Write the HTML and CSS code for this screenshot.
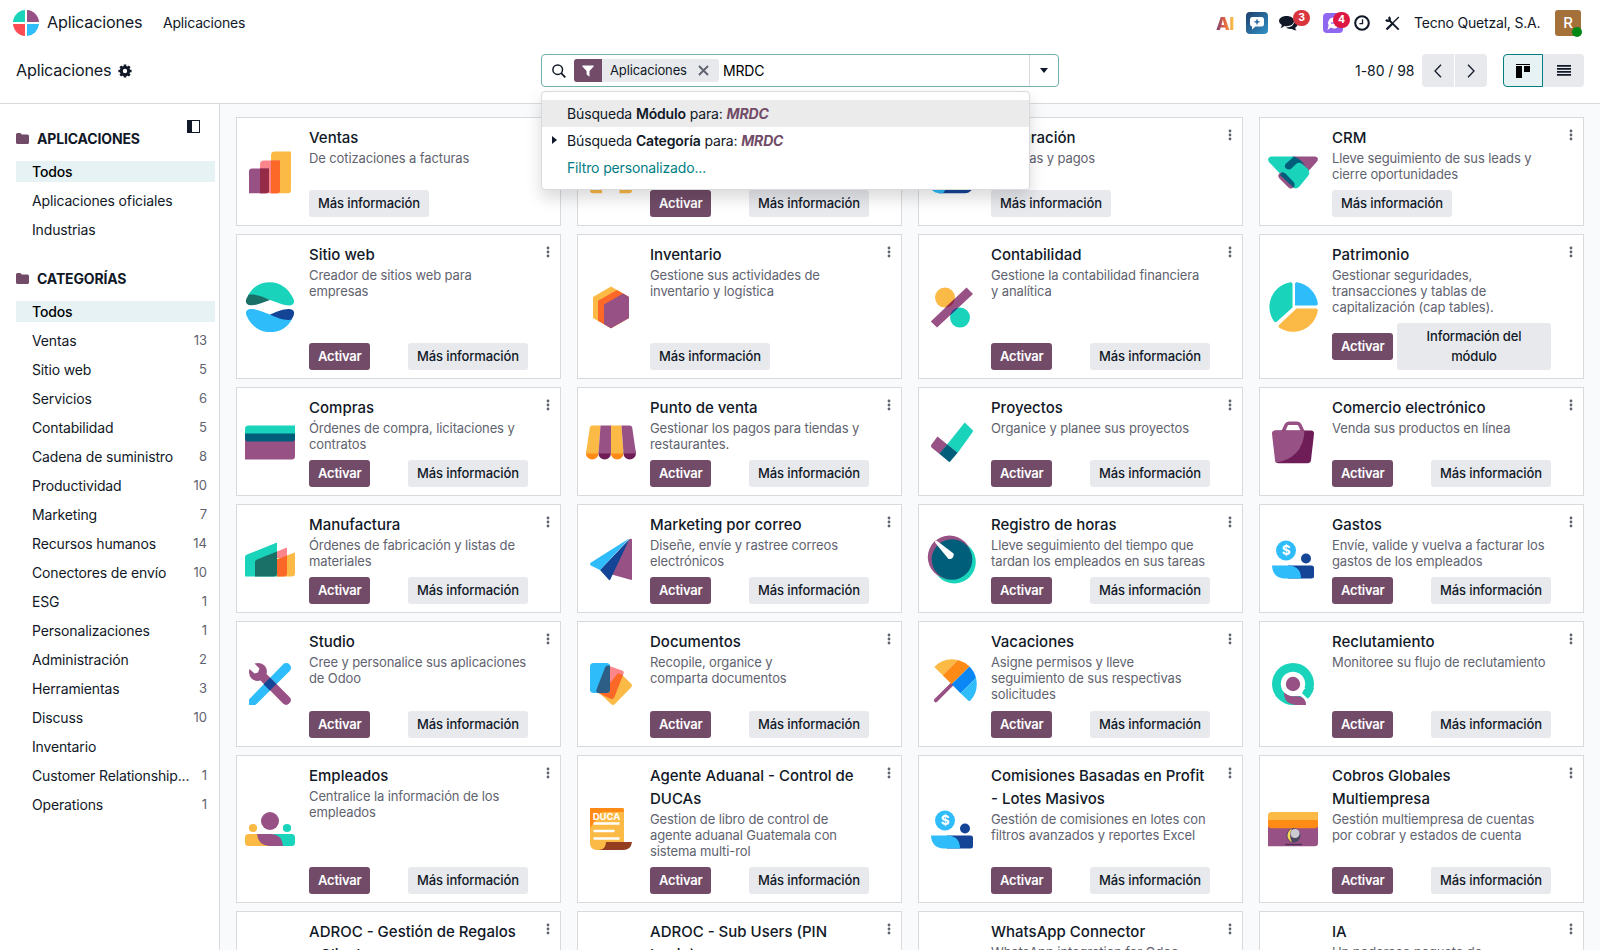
FILE: index.html
```html
<!DOCTYPE html>
<html lang="es">
<head>
<meta charset="utf-8">
<title>Aplicaciones</title>
<link rel="stylesheet" href="styles.css">
</head>
<body>
<svg class="defs" width="0" height="0">
  <defs>
    <linearGradient id="gBlue" x1="0" y1="0" x2="1" y2="1"><stop offset="0" stop-color="#1f3f6b"/><stop offset="1" stop-color="#3193c8"/></linearGradient>
    <clipPath id="slash"><path d="M3.8 39.5L39.5 5.5L46 12L10 45.5Z"/></clipPath>
    <symbol id="dots" viewBox="0 0 4 12"><circle cx="2" cy="2" r="1.4"/><circle cx="2" cy="6" r="1.4"/><circle cx="2" cy="10" r="1.4"/></symbol>
    <symbol id="folder" viewBox="0 0 13 11"><path d="M0 1.6Q0 0 1.6 0H4Q5.5 0 5.6 1.5H11.5Q13 1.5 13 3V9.4Q13 11 11.4 11H1.6Q0 11 0 9.4Z"/></symbol>
    <symbol id="expense" viewBox="0 0 50 50"><path fill="#144496" d="M20 31.5H43.5Q46 31.5 46 34V42Q46 44.500 43.500 44.500H20Z"/><path fill="#2ebcfa" d="M4 31.500H22Q33 33 33 44.500H17Q4.500 44 4 31.500Z"/><circle fill="#2ebcfa" cx="18" cy="16.500" r="10"/><circle fill="#144496" cx="38" cy="24.500" r="5"/><text x="18" y="21.400" text-anchor="middle" class="coin">$</text></symbol>
  </defs>
</svg>

<header class="navbar">
  <svg class="logo" viewBox="0 0 26 26"><path fill="#1ad3bb" d="M12 0V12H0A13 13 0 0 1 12 0"/><path fill="#985184" d="M14 0V12H26A13 13 0 0 0 14 0"/><path fill="#fc4b53" d="M12 26V14H0A13 13 0 0 0 12 26"/><path fill="#2ebcfa" d="M14 26V14H26A13 13 0 0 1 14 26"/></svg>
  <span class="brand">Aplicaciones</span>
  <span class="menu">Aplicaciones</span>
  <div class="systray">
    <span class="ai">AI</span>
    <svg class="t-chat" width="22" height="22" viewBox="0 0 22 22"><rect width="22" height="22" rx="4" fill="url(#gBlue)"/><path fill="#fff" d="M6.500 5H15.500Q18 5 18 7.500V12Q18 14.500 15.500 14.500H9.500L6 17.500V14.500Q4 14.200 4 12V7.500Q4 5 6.500 5Z"/><path d="M11 6.500L12 8.900L14.500 9.800L12 10.700L11 13.200L10 10.700L7.500 9.800L10 8.900Z" fill="#2f6da0"/></svg>
    <span class="t-msg"><svg width="19" height="15" viewBox="0 0 19 15" fill="#111827"><path d="M7.500 0C12 0 15 2.200 15 5S12 10.200 7.500 10.200Q6.500 10.200 5.500 10Q4 11.500 1.500 12Q2.800 10.500 2.800 9Q0 7.500 0 5C0 2.200 3.200 0 7.500 0Z"/><path d="M16 4.500Q18.500 6 18.500 8.500Q18.500 10.500 16.200 11.800Q16.300 13.500 17.500 14.600Q14.500 14.200 13 12.900Q9 13.500 7 11.600Q15 11.300 16 4.500Z"/></svg><b class="badge">3</b></span>
    <span class="t-wa"><svg width="20" height="20" viewBox="0 0 20 20"><rect width="20" height="20" rx="4" fill="#9068f0"/><path fill="#fff" d="M11 4.500A5.500 5.500 0 1 1 8 14.600L4.500 17L5.600 12.500A5.500 5.500 0 0 1 11 4.500Z"/><path fill="none" stroke="#9068f0" stroke-width="1.300" d="M8 10H14"/></svg><b class="badge crimson">4</b></span>
    <svg class="t-clock" width="16" height="16" viewBox="0 0 16 16" fill="none" stroke="#111827"><circle cx="8" cy="8" r="6.800" stroke-width="2.100"/><path d="M8.500 4.300V8.600H5.400" stroke-width="1.300"/></svg>
    <svg class="t-tools" width="15" height="15" viewBox="0 0 15 15" fill="none" stroke="#111827" stroke-width="2.300"><path d="M1.500 13.500L8 7"/><path d="M8 6.800L13.800 1" stroke-width="1.300"/><path d="M4 4L13.700 13.700" stroke-width="1.900"/><path d="M1 3.800Q2.500 5.600 4.300 4.400Q5.400 2.600 3.800 1"/></svg>
    <span class="company">Tecno Quetzal, S.A.</span>
    <span class="avatar">R<i class="online"></i></span>
  </div>
</header>

<section class="panel">
  <span class="crumb">Aplicaciones</span>
  <svg class="gear" width="14" height="14" viewBox="0 0 14 14"><circle cx="7" cy="7" r="3.700" fill="none" stroke="#111827" stroke-width="3"/><path d="M7 .4V3M7 11V13.600M.4 7H3M11 7H13.600M2.300 2.300L4 4M10 10L11.700 11.700M2.300 11.700L4 10M10 4L11.700 2.300" stroke="#111827" stroke-width="2.600"/></svg>
  <div class="search">
    <svg class="lens" width="14" height="14" viewBox="0 0 14 14" fill="none" stroke="#111827"><circle cx="5.700" cy="5.700" r="4.800" stroke-width="1.500"/><path d="M9.200 9.200L13.300 13.300" stroke-width="1.800"/></svg>
    <span class="facet"><span class="facet-icon"><svg width="12" height="12" viewBox="0 0 12 12"><path fill="#fff" d="M.4.500H11.600V1.500L7.500 5.900V11.700L4.600 9.500V5.900L.4 1.500Z"/></svg></span><span class="facet-text">Aplicaciones</span><svg width="11" height="11" viewBox="0 0 11 11"><path d="M1 1L10 10M10 1L1 10" stroke="#5f636f" stroke-width="1.900"/></svg></span>
    <span class="query">MRDC</span>
    <span class="toggle"><i class="caret"></i></span>
    <div class="suggest">
      <div class="opt active">Búsqueda <b>Módulo</b> para: <em>MRDC</em></div>
      <div class="opt"><i class="expand"></i>Búsqueda <b>Categoría</b> para: <em>MRDC</em></div>
      <div class="opt custom">Filtro personalizado...</div>
    </div>
  </div>
  <div class="right">
    <span class="pager">1-80 / 98</span>
    <div class="pg"><span><svg width="8" height="14" viewBox="0 0 8 14"><path d="M7 .8L1 7L7 13.200"/></svg></span><span><svg width="8" height="14" viewBox="0 0 8 14"><path d="M1 .8L7 7L1 13.200"/></svg></span></div>
    <div class="views"><span class="on"><svg width="14" height="14" viewBox="0 0 14 14"><path d="M0 0H14V1H0ZM0 2H6V14H0ZM8 2H14V8H8Z"/></svg></span><span><svg width="14" height="11" viewBox="0 0 14 11"><path fill="#111827" d="M0 0H14V1.800H0ZM0 3H14V4.800H0ZM0 6H14V7.800H0ZM0 9H14V10.800H0Z"/></svg></span></div>
  </div>
</section>

<div class="body">
<aside class="sidebar">
  <svg class="collapse" width="13" height="13" viewBox="0 0 13 13"><rect x=".5" y=".5" width="12" height="12" fill="none" stroke="#111827"/><path fill="#111827" d="M0 0H5V13H0Z"/></svg>
  <h2><svg><use href="#folder"/></svg>APLICACIONES</h2>
  <ul>
    <li class="sel">Todos</li><li>Aplicaciones oficiales</li><li>Industrias</li>
  </ul>
  <h2><svg><use href="#folder"/></svg>CATEGORÍAS</h2>
  <ul>
    <li class="sel">Todos</li>
    <li>Ventas<span>13</span></li>
    <li>Sitio web<span>5</span></li>
    <li>Servicios<span>6</span></li>
    <li>Contabilidad<span>5</span></li>
    <li>Cadena de suministro<span>8</span></li>
    <li>Productividad<span>10</span></li>
    <li>Marketing<span>7</span></li>
    <li>Recursos humanos<span>14</span></li>
    <li>Conectores de envío<span>10</span></li>
    <li>ESG<span>1</span></li>
    <li>Personalizaciones<span>1</span></li>
    <li>Administración<span>2</span></li>
    <li>Herramientas<span>3</span></li>
    <li>Discuss<span>10</span></li>
    <li>Inventario</li>
    <li>Customer Relationship...<span>1</span></li>
    <li>Operations<span>1</span></li>
  </ul>
</aside>

<main class="grid">
  <article class="card"><svg class="icon" viewBox="0 0 50 50"><path fill="#fbb945" d="M30 4.500H46V43Q46 46.200 43 46.200H26V8.500Q26 4.500 30 4.500Z"/><path fill="#fc868b" d="M19 13.500H35V43Q35 46.200 32 46.200H15V17.500Q15 13.500 19 13.500Z"/><path fill="#fc6828" d="M26 13.500H35V43Q35 46.200 32 46.200H26Z"/><path fill="#985184" d="M7 21.500H24V43Q24 46.200 21 46.200H4V24.500Q4 21.500 7 21.500Z"/><path fill="#962b48" d="M15 21.500H24V43Q24 46.200 21 46.200H15Z"/></svg><div class="info"><h3>Ventas</h3><p>De cotizaciones a facturas</p><div class="acts"><button class="more">Más información</button></div></div><svg class="kebab"><use href="#dots"/></svg></article>

  <article class="card"><svg class="icon" viewBox="0 0 50 50"><path fill="#985184" d="M4 8H46V26H4Z"/><path fill="#fbb945" d="M4 26H46V43Q46 46.200 43 46.200H33.500V34H16V46.200H7Q4 46.200 4 43Z"/></svg><div class="info"><div class="acts"><button class="go">Activar</button><button class="more">Más información</button></div></div><svg class="kebab"><use href="#dots"/></svg></article>

  <article class="card"><svg class="icon" viewBox="0 0 50 50"><path fill="#144496" d="M18 30H46V39Q45 46 38 46.200H12Z"/><path fill="#2ebcfa" d="M4 30H22V38L16 46.200H12Q4 46 4 38Z"/></svg><div class="info"><h3>Facturación</h3><p>Facturas y pagos</p><div class="acts"><button class="more">Más información</button></div></div><svg class="kebab"><use href="#dots"/></svg></article>

  <article class="card"><svg class="icon" viewBox="0 0 50 50"><path fill="#985184" d="M24 9.500H47Q51.500 10 49 14.500L40.500 24L24 16Z"/><path fill="#1ad3bb" d="M3 9.500H25L40 22Q42.500 26 40 29L31 40Q28 42.500 25 40.500L1 15Q-1.500 10.500 3 9.500Z"/><path fill="#005e7a" d="M26 9.600Q32 11.500 37.500 19Q32 13.500 28 17L24 21Q21 23.800 18 21.500Q15.500 19 18 16.500Z"/><path fill="#985184" d="M14 25.200L26 37Q26.500 40 24 41.400Q21.500 42 20 40L11 31Q8.500 27 14 25.200Z"/><path fill="#005e7a" d="M14 25.200Q16 25 18 27L26 35.500Q27.500 39 25.500 40.500L12 28Z"/></svg><div class="info"><h3>CRM</h3><p>Lleve seguimiento de sus leads y<br>cierre oportunidades</p><div class="acts"><button class="more">Más información</button></div></div><svg class="kebab"><use href="#dots"/></svg></article>

  <article class="card"><svg class="icon" viewBox="0 0 50 50"><path fill="#1ad3bb" d="M3 13.500C8 4 16 .2 25 .2C36 .2 44 7 48.500 17C50.500 22 46.500 24 42 23.300C36 22.500 31 20 25 18Q12 14 3 13.500Z"/><path fill="#1a6f66" d="M3.500 12.800C10 11.500 19 15 25 18C18 20.500 12 23.500 6 23.300C1 23 0 20 1.500 16.500Z"/><g transform="rotate(180 25 25.200)"><path fill="#2ebcfa" d="M3 13.500C8 4 16 .2 25 .2C36 .2 44 7 48.500 17C50.500 22 46.500 24 42 23.300C36 22.500 31 20 25 18Q12 14 3 13.500Z"/><path fill="#144496" d="M3.500 12.800C10 11.500 19 15 25 18C18 20.500 12 23.500 6 23.300C1 23 0 20 1.500 16.500Z"/></g></svg><div class="info"><h3>Sitio web</h3><p>Creador de sitios web para<br>empresas</p><div class="acts"><button class="go">Activar</button><button class="more">Más información</button></div></div><svg class="kebab"><use href="#dots"/></svg></article>

  <article class="card"><svg class="icon" viewBox="0 0 50 50"><path fill="#fbb945" d="M25 4.500L43 15V36L25 46.300L7 36V15Z"/><path fill="#fc6828" d="M31 8L43 15V36L25 46.300L12 38.800V18.700Z"/><path fill="#985184" d="M37 11.500L43 15V36L25 46.300L18 42.200V22.500Z"/></svg><div class="info"><h3>Inventario</h3><p>Gestione sus actividades de<br>inventario y logística</p><div class="acts"><button class="more">Más información</button></div></div><svg class="kebab"><use href="#dots"/></svg></article>

  <article class="card"><svg class="icon" viewBox="0 0 50 50"><circle fill="#fbb945" cx="18" cy="15.600" r="10"/><circle fill="#1ad3bb" cx="33" cy="35.600" r="10"/><path fill="#985184" d="M3.800 39.500L39.500 5.500L46 12L10 45.500Z"/><g clip-path="url(#slash)"><circle fill="#962b48" cx="18" cy="15.600" r="10"/><circle fill="#144496" cx="33" cy="35.600" r="10"/></g></svg><div class="info"><h3>Contabilidad</h3><p>Gestione la contabilidad financiera<br>y analítica</p><div class="acts"><button class="go">Activar</button><button class="more">Más información</button></div></div><svg class="kebab"><use href="#dots"/></svg></article>

  <article class="card"><svg class="icon" viewBox="0 0 50 50"><path fill="#1ad3bb" d="M22.500 .2Q24.500 0 24.500 2V25.500L9 39.500Q7.500 41 6 39.300A25 25 0 0 1 22.500 .2Z"/><path fill="#2ebcfa" d="M27 2Q27 0 29 .3A25 25 0 0 1 49.800 21.500Q50 23.500 48 23.500H27Z"/><path fill="#fbb945" d="M28.500 26.500H48Q50 26.500 49.800 28.500A25 25 0 0 1 11 45.500Q9.800 44 11.500 42.500Z"/></svg><div class="info"><h3>Patrimonio</h3><p>Gestionar seguridades,<br>transacciones y tablas de<br>capitalización (cap tables).</p><div class="acts"><button class="go">Activar</button><button class="more wide">Información del<br>módulo</button></div></div><svg class="kebab"><use href="#dots"/></svg></article>

  <article class="card"><svg class="icon" viewBox="0 0 50 50"><path fill="#985184" d="M0 22H50V39Q50 42.500 46.500 42.500H0Z"/><path fill="#1ad3bb" d="M3.500 8.500H50V18H0V12Q0 8.500 3.500 8.500Z"/><path fill="#005e7a" d="M0 16.500H50V21.500Q50 24.600 46.500 24.600H3.500Q0 24.600 0 21.500Z"/></svg><div class="info"><h3>Compras</h3><p>Órdenes de compra, licitaciones y<br>contratos</p><div class="acts"><button class="go">Activar</button><button class="more">Más información</button></div></div><svg class="kebab"><use href="#dots"/></svg></article>

  <article class="card"><svg class="icon" viewBox="0 0 50 50"><g fill="#ff8a15"><circle cx="6.200" cy="36.400" r="6.200"/><circle cx="31.200" cy="36.400" r="6.200"/></g><g fill="#6f1d57"><circle cx="18.700" cy="36.400" r="6.200"/><circle cx="43.700" cy="36.400" r="6.200"/></g><path fill="#fbb945" d="M6.500 8.500H14.500L12.500 36.500H0L3.800 10.500Q4 8.500 6.500 8.500ZM25 8.500H35.500L37.500 36.500H25Z"/><path fill="#985184" d="M14.500 8.500H25V36.500H12.500ZM35.500 8.500H43.500Q46 8.500 46.200 10.500L50 36.500H37.500Z"/></svg><div class="info"><h3>Punto de venta</h3><p>Gestionar los pagos para tiendas y<br>restaurantes.</p><div class="acts"><button class="go">Activar</button><button class="more">Más información</button></div></div><svg class="kebab"><use href="#dots"/></svg></article>

  <article class="card"><svg class="icon" viewBox="0 0 50 50"><path fill="#1ad3bb" d="M37.700 5.500L45.500 13Q46.500 14 45.700 15L30.600 36L20.300 27.200Z"/><path fill="#985184" d="M10.500 19.500L20.300 27.500L12.500 37L4.500 30.500Q3.300 29 4.500 27.500Z"/><path fill="#005e7a" d="M20.300 27.200L30.600 35.700L22.500 45.300L12.300 36.800Z"/></svg><div class="info"><h3>Proyectos</h3><p>Organice y planee sus proyectos</p><div class="acts"><button class="go">Activar</button><button class="more">Más información</button></div></div><svg class="kebab"><use href="#dots"/></svg></article>

  <article class="card"><svg class="icon" viewBox="0 0 50 50"><path fill="none" stroke="#985184" stroke-width="3.500" d="M15 15L18 8.200Q19 6.300 21 6.300H29Q31 6.300 32 8.200L35 15"/><path fill="#6f1d57" d="M7 13.500H43Q46.300 13.500 46 17L43 43Q42.500 46.200 39.500 46.200H10.500Q7.500 46.200 7 43Z"/><path fill="#985184" d="M7 13.500H36.500Q36 28 28 36Q20 44 8.500 45.500Q7.200 44.500 7 43L4 17Q3.700 13.500 7 13.500Z"/></svg><div class="info"><h3>Comercio electrónico</h3><p>Venda sus productos en línea</p><div class="acts"><button class="go">Activar</button><button class="more">Más información</button></div></div><svg class="kebab"><use href="#dots"/></svg></article>

  <article class="card"><svg class="icon" viewBox="0 0 50 50"><path fill="#fbb945" d="M32 25L50 18.500V39Q50 42.500 46.500 42.500H32Z"/><path fill="#fc868b" d="M32 17.500L42 13.500V24H32Z"/><path fill="#fc6828" d="M32 25.500L42 21.500V39Q42 42.500 38.500 42.500H32Z"/><path fill="#1ad3bb" d="M2 20.500L32 8.500V42.500H0V23Q0 21.300 2 20.500Z"/><path fill="#1a6f66" d="M12 25.500L32 17.500V39Q32 42.500 28.500 42.500H10V28Q10 26.300 12 25.500Z"/></svg><div class="info"><h3>Manufactura</h3><p>Órdenes de fabricación y listas de<br>materiales</p><div class="acts"><button class="go">Activar</button><button class="more">Más información</button></div></div><svg class="kebab"><use href="#dots"/></svg></article>

  <article class="card"><svg class="icon" viewBox="0 0 50 50"><path fill="#985184" d="M43.500 5Q46 4 46 6V45Q46 46.300 44.500 45.800L24 40Z"/><path fill="#144496" d="M43.500 5L24.300 45.500Q23.700 46.800 22.800 45.800L14 36Z"/><path fill="#2ebcfa" d="M43.500 4.300L14 36L4.800 31.500Q3 30 5 28.500Z"/></svg><div class="info"><h3>Marketing por correo</h3><p>Diseñe, envíe y rastree correos<br>electrónicos</p><div class="acts"><button class="go">Activar</button><button class="more">Más información</button></div></div><svg class="kebab"><use href="#dots"/></svg></article>

  <article class="card"><svg class="icon" viewBox="0 0 50 50"><circle fill="#1ad3bb" cx="27.300" cy="28" r="21.500"/><circle fill="#985184" cx="22.500" cy="23.200" r="21.700"/><circle fill="#005e7a" cx="25" cy="25.500" r="20.300"/><path fill="#fff" d="M9.500 6.500L26.500 19.500A4.300 4.300 0 0 1 21.500 25L8 8.500Q8 6.500 9.500 6.500Z"/></svg><div class="info"><h3>Registro de horas</h3><p>Lleve seguimiento del tiempo que<br>tardan los empleados en sus tareas</p><div class="acts"><button class="go">Activar</button><button class="more">Más información</button></div></div><svg class="kebab"><use href="#dots"/></svg></article>

  <article class="card"><svg class="icon" viewBox="0 0 50 50"><use href="#expense"/></svg><div class="info"><h3>Gastos</h3><p>Envíe, valide y vuelva a facturar los<br>gastos de los empleados</p><div class="acts"><button class="go">Activar</button><button class="more">Más información</button></div></div><svg class="kebab"><use href="#dots"/></svg></article>

  <article class="card"><svg class="icon" viewBox="0 0 50 50"><path fill="#2ebcfa" d="M4 46V40.500L38 5.500A4.600 4.600 0 0 1 44.700 12L10.500 46Z"/><path fill="#985184" d="M9.500 4.500Q16 2.500 20 7Q22.800 11 21.500 15L44.500 38A4.600 4.600 0 0 1 38 44.500L15.500 21.500Q10 23 6.500 19.500Q3 15.500 4.500 10L9.500 14.500L13 13.500L14.500 9.500Z"/><path fill="#144496" d="M25 18.700L31.300 25L24.800 31.500L18.600 25.200Z"/></svg><div class="info"><h3>Studio</h3><p>Cree y personalice sus aplicaciones<br>de Odoo</p><div class="acts"><button class="go">Activar</button><button class="more">Más información</button></div></div><svg class="kebab"><use href="#dots"/></svg></article>

  <article class="card"><svg class="icon" viewBox="0 0 50 50"><path fill="#fbb945" d="M33 13L45 24.500Q47 26.500 45 28.500L29 45Q27 47 25 45L13 33.500Z"/><path fill="#fc868b" d="M22 6.500L36 11.500Q38.500 12.500 37.500 15L24 36L12 30Z"/><path fill="#fc6828" d="M32 14L37 16L28.500 38Q27.500 41 24.500 39.800L11 33.500L24 32L24 24Z"/><rect fill="#2ebcfa" x="4" y="4" width="20" height="30" rx="3.500"/><path fill="#2d5f86" d="M21.500 6.500H24V30.500Q24 34 20.500 34H12Q9.500 33 10.500 30.500L19 8.500Q20 6.500 21.500 6.500Z"/></svg><div class="info"><h3>Documentos</h3><p>Recopile, organice y<br>comparta documentos</p><div class="acts"><button class="go">Activar</button><button class="more">Más información</button></div></div><svg class="kebab"><use href="#dots"/></svg></article>

  <article class="card"><svg class="icon" viewBox="0 0 50 50"><path stroke="#985184" stroke-width="3.800" stroke-linecap="round" d="M24.700 25.500L8.800 41.400"/><path fill="#fbb945" d="M15.700 16.300L7.300 8A25 25 0 0 1 31 1Z"/><path fill="#ff8a15" d="M24.700 25.200L15.700 16.300L31 1Q37.500 2.800 42.500 7.500Z"/><path fill="#0a87f5" d="M24.700 25.200L42.500 7.500Q47.500 12.500 49 19L33.500 34.200Z"/><path fill="#2ebcfa" d="M49 19Q52 32 43.500 41.500Q42.500 42.500 41.500 41.800L33.500 34.200Z"/></svg><div class="info"><h3>Vacaciones</h3><p>Asigne permisos y lleve<br>seguimiento de sus respectivas<br>solicitudes</p><div class="acts"><button class="go">Activar</button><button class="more">Más información</button></div></div><svg class="kebab"><use href="#dots"/></svg></article>

  <article class="card"><svg class="icon" viewBox="0 0 50 50"><circle fill="#1ad3bb" cx="25" cy="25" r="21"/><path fill="#fff" d="M25 37H33L38 47H50V38L35 28Z"/><path fill="#1ad3bb" d="M36 30L46 29Q44 36 39.800 39.800L34 34.300Z"/><circle fill="#fff" cx="25" cy="25" r="12.200"/><circle fill="#985184" cx="25" cy="25" r="7.200"/><path fill="#985184" d="M16 33.500Q20 37 25 37.200H30Q38 38 38 46H28Q16 45 16 33.500Z"/></svg><div class="info"><h3>Reclutamiento</h3><p>Monitoree su flujo de reclutamiento</p><div class="acts"><button class="go">Activar</button><button class="more">Más información</button></div></div><svg class="kebab"><use href="#dots"/></svg></article>

  <article class="card"><svg class="icon" viewBox="0 0 50 50"><circle fill="#985184" cx="25" cy="17" r="9"/><circle fill="#fbb945" cx="8" cy="24" r="4.100"/><circle fill="#1ad3bb" cx="42" cy="24" r="4.100"/><path fill="#fbb945" d="M3.500 30H14L24 42H3.500Q0 42 0 38.500V33.500Q0 30 3.500 30Z"/><path fill="#1ad3bb" d="M28 30H46.500Q50 30 50 33.500V38.500Q50 42 46.500 42H36Z"/><path fill="#985184" d="M12 30H27Q37 31 38 42H24Q13 41 12 30Z"/></svg><div class="info"><h3>Empleados</h3><p>Centralice la información de los<br>empleados</p><div class="acts"><button class="go">Activar</button><button class="more">Más información</button></div></div><svg class="kebab"><use href="#dots"/></svg></article>

  <article class="card"><svg class="icon" viewBox="0 0 50 50"><path fill="#fbb945" d="M4 4H38V38H20V46H10Q4 45 4 39Z"/><path fill="#ff8a15" d="M4 4H35Q38 4 38 8H16L4 24Z"/><path fill="#953d20" d="M20 38H46Q45 46 37 46H13Q20 45 20 38Z"/><text x="20.500" y="15.800" text-anchor="middle" class="duca">DUCA</text><path stroke="#fff" stroke-width="2.600" d="M7.500 19.500H33.500M7.500 27H28.500M7.500 34.500H33.500"/></svg><div class="info"><h3>Agente Aduanal - Control de<br>DUCAs</h3><p>Gestion de libro de control de<br>agente aduanal Guatemala con<br>sistema multi-rol</p><div class="acts"><button class="go">Activar</button><button class="more">Más información</button></div></div><svg class="kebab"><use href="#dots"/></svg></article>

  <article class="card"><svg class="icon" viewBox="0 0 50 50"><use href="#expense"/></svg><div class="info"><h3>Comisiones Basadas en Profit<br>- Lotes Masivos</h3><p>Gestión de comisiones en lotes con<br>filtros avanzados y reportes Excel</p><div class="acts"><button class="go">Activar</button><button class="more">Más información</button></div></div><svg class="kebab"><use href="#dots"/></svg></article>

  <article class="card"><svg class="icon" viewBox="0 0 50 50"><path fill="#985184" d="M0 22H50V39Q50 42.300 46.500 42.300H0Z"/><path fill="#fbb945" d="M3.500 8H50V18H0V11.500Q0 8 3.500 8Z"/><path fill="#ff8a15" d="M0 16H50V21Q50 24.200 46.500 24.200H3.500Q0 24.200 0 21Z"/><ellipse cx="25.500" cy="31.500" rx="7" ry="7.200" fill="#4b4761"/><path fill="#fbd75a" d="M24 24.500Q19 27 19.500 33Q21 37 24 38Q20 31 24 24.500Z"/><circle cx="27" cy="29.500" r="4.600" fill="#ccc9d0"/><path stroke="#513159" stroke-width="1.400" d="M17 40.500H34"/></svg><div class="info"><h3>Cobros Globales<br>Multiempresa</h3><p>Gestión multiempresa de cuentas<br>por cobrar y estados de cuenta</p><div class="acts"><button class="go">Activar</button><button class="more">Más información</button></div></div><svg class="kebab"><use href="#dots"/></svg></article>

  <article class="card"><svg class="icon" viewBox="0 0 50 50"></svg><div class="info"><h3>ADROC - Gestión de Regalos<br>- Clientes</h3></div><svg class="kebab"><use href="#dots"/></svg></article>
  <article class="card"><svg class="icon" viewBox="0 0 50 50"></svg><div class="info"><h3>ADROC - Sub Users (PIN<br>Login)</h3></div><svg class="kebab"><use href="#dots"/></svg></article>
  <article class="card"><svg class="icon" viewBox="0 0 50 50"></svg><div class="info"><h3>WhatsApp Connector</h3><p>WhatsApp integration for Odoo</p></div><svg class="kebab"><use href="#dots"/></svg></article>
  <article class="card"><svg class="icon" viewBox="0 0 50 50"></svg><div class="info"><h3>IA</h3><p>Un poderoso paquete de</p></div><svg class="kebab"><use href="#dots"/></svg></article>
</main>
</div>
</body>
</html>
```
FILE: styles.css
```css
* { box-sizing: border-box; }
body { margin: 0; height: 950px; overflow: hidden; display: flex; flex-direction: column; background: #fff; color: #111827; font: 14px/21px Inter, "Liberation Sans", sans-serif; letter-spacing: -.15px; white-space: nowrap; }
svg { display: block; flex: none; }
.defs { position: absolute; }
h2, h3, p, ul { margin: 0; padding: 0; list-style: none; }

.navbar { flex: none; height: 46px; display: flex; align-items: center; padding: 0 19px 0 13px; }
.logo { width: 26px; height: 26px; }
.brand { font-size: 16.200px; letter-spacing: -.2px; width: 116px; margin-left: 8px; padding-bottom: 1px; }
.menu, .company { padding-bottom: 1px; }
.menu { letter-spacing: -.2px; }
.systray { margin-left: auto; display: flex; align-items: center; height: 46px; }
.ai { font-size: 18px; font-weight: 800; letter-spacing: -.5px; width: 18px; margin-right: 12px; background: linear-gradient(90deg, #6d3b78, #e0603f 45%, #fbb945 90%); -webkit-background-clip: text; background-clip: text; color: transparent; }
.t-chat { margin-right: 11px; }
.t-msg { position: relative; width: 19px; margin-right: 25px; }
.t-wa { position: relative; width: 20px; margin-right: 11px; }
.badge { position: absolute; left: 14px; top: -6px; width: 17px; height: 16px; border-radius: 8px; background: #d8353f; color: #fff; font-size: 10.500px; line-height: 16px; text-align: center; }
.badge.crimson { left: 10px; top: -1px; background: #dc1843; }
.t-clock { margin-right: 15px; }
.t-tools { margin-right: 14px; }
.company { width: 141px; letter-spacing: -.2px; }
.avatar { position: relative; width: 26px; height: 26px; border-radius: 3px; background: #a5713b; color: #fff; font-size: 15px; font-weight: 500; line-height: 26px; text-align: center; }
.online { position: absolute; right: -1px; bottom: -1px; width: 10px; height: 10px; border-radius: 50%; background: #008817; }

.panel { flex: none; height: 58px; display: flex; align-items: flex-start; padding: 8px 16px 0; border-bottom: 1px solid #d8dadd; }
.crumb { font-size: 16.200px; letter-spacing: -.2px; line-height: 33px; width: 101.500px; }
.gear { margin-top: 10px; }
.search { position: relative; margin-left: 409.500px; width: 518px; height: 33px; display: flex; align-items: center; border: 1px solid #74adaf; border-radius: 4px; padding-left: 10px; }
.lens { margin-right: 8px; }
.facet { display: flex; align-items: center; width: 145px; height: 23px; border-radius: 3px; overflow: hidden; background: #e7e9ed; font-size: 13px; margin-right: 4px; }
.facet-icon { width: 28px; height: 23px; display: flex; align-items: center; justify-content: center; background: #714b67; margin-right: 8px; }
.facet-text { width: 88px; }
.query { flex: 1; color: #000; }
.toggle { width: 29px; height: 31px; border-left: 1px solid #d8dadd; display: flex; align-items: center; justify-content: center; }
.caret { border: 4.500px solid transparent; border-top: 5px solid #111827; border-bottom: 0; }
.suggest { position: absolute; z-index: 5; left: -1px; top: 36px; width: 489px; height: 99px; padding-top: 8px; background: #fff; border: 1px solid #d8dadd; border-radius: 4px; box-shadow: 0 8px 16px rgba(0,0,0,.15); }
.opt { position: relative; height: 27px; line-height: 28px; padding-left: 25px; }
.opt.active { background: #ebebeb; }
.opt b { font-weight: 600; }
.opt em { font-weight: 700; color: #714b67; }
.opt.custom { color: #017e84; }
.expand { position: absolute; left: 10px; top: 9px; border: 4.500px solid transparent; border-left: 5px solid #111827; border-right: 0; }
.right { margin-left: auto; display: flex; align-items: center; }
.pager { width: 67px; letter-spacing: -.05px; }
.pg { display: flex; gap: 1px; margin-right: 16px; }
.pg span, .views span { display: flex; align-items: center; justify-content: center; width: 32px; height: 33px; background: #e7e9ed; }
.pg svg { fill: none; stroke: #111827; stroke-width: 1.300; }
.pg span:first-child, .views span:first-child { border-radius: 4px 0 0 4px; }
.pg span:last-child, .views span:last-child { border-radius: 0 4px 4px 0; }
.views { display: flex; }
.views span { width: 41px; }
.views .on { width: 40px; background: #e6f2f3; border: 1px solid #017e84; }

.body { flex: 1; min-height: 0; display: flex; }
.sidebar { position: relative; width: 220px; border-right: 1px solid #d8dadd; padding: 24px 4px 0 16px; }
.collapse { position: absolute; left: 187px; top: 16px; }
.sidebar h2 { display: flex; align-items: center; height: 21px; line-height: 22px; gap: 8px; font-size: 14px; font-weight: 700; margin-bottom: 12px; }
.sidebar h2 svg { width: 13px; height: 11px; fill: #714b67; }
.sidebar ul { display: flex; flex-direction: column; gap: 8px; margin-bottom: 28px; }
.sidebar li { display: flex; justify-content: space-between; height: 21px; line-height: 22px; padding: 0 8px 0 16px; }
.sidebar li span { font-size: 13px; line-height: 21px; letter-spacing: 0; color: #5f636f; }
.sidebar .sel { background: #e6f2f3; font-weight: 500; color: #000; }

.grid { flex: 1; display: grid; grid-template-columns: repeat(4, 325px); grid-template-rows: 109px 145px 109px 109px 126px 148px 148px; gap: 8px 16px; padding: 13px 16px 0; background: #f9fafb; overflow: hidden; }
.card { position: relative; display: flex; align-items: center; padding: 8px; gap: 14px; background: #fff; border: 1px solid #d8dadd; }
.icon { width: 50px; height: 50px; }
.info { align-self: stretch; width: 219px; display: flex; flex-direction: column; }
.info h3 { font-size: 15px; line-height: 23px; font-weight: 500; letter-spacing: 0; }
.info p { font-size: 13px; line-height: 16.250px; padding-top: .7px; letter-spacing: -.11px; color: #5f636f; }
.acts { margin-top: auto; display: flex; align-items: center; justify-content: space-between; }
button { flex: none; height: 27px; padding: 0 9px; border: 0; border-radius: 3px; font: 500 13px/19.500px Inter, sans-serif; letter-spacing: -.13px; color: #111827; background: #e7e9ed; white-space: nowrap; }
.go { width: 61px; background: #714b67; color: #fff; font-weight: 600; letter-spacing: -.2px; }
.more { width: 120px; }
.wide { width: 154px; height: 47px; }
.kebab { position: absolute; right: 10.500px; top: 10.500px; width: 4px; height: 12px; fill: #5f636f; }
.coin { font: 700 13.500px Inter, sans-serif; fill: #fff; }
.duca { font: 700 9.500px Inter, sans-serif; fill: #fff; letter-spacing: 0; }
```
